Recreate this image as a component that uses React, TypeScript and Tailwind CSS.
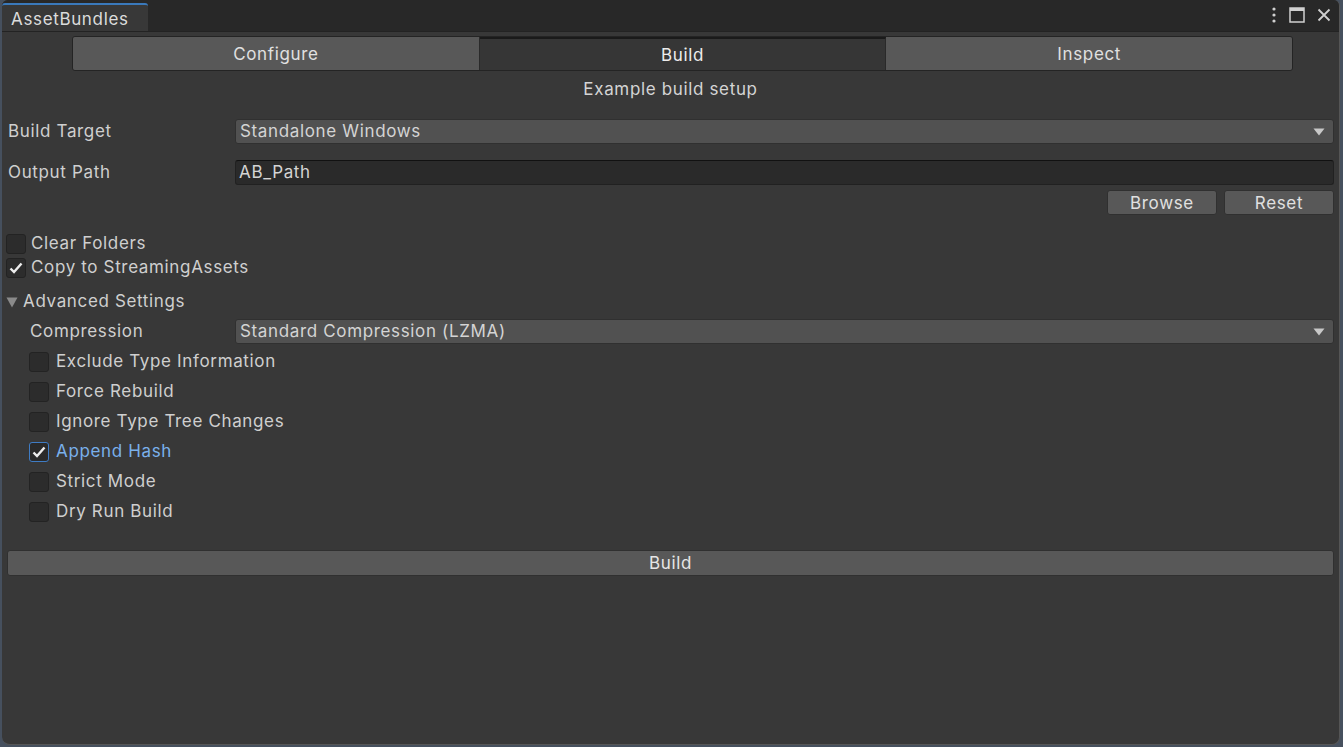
import { useState } from 'react';

const font = { fontFamily: 'Inter, "Noto Sans", sans-serif' };

function Checkbox({ checked, focused }: { checked: boolean; focused?: boolean }) {
  return (
    <div
      className={`w-[20px] h-[20px] rounded-[3px] border flex items-center justify-center shrink-0 ${
        focused ? 'border-[#3f7cc4] bg-[#2a2a2a]' : 'border-[#232323] bg-[#2c2c2c]'
      }`}
    >
      {checked && (
        <svg width="16" height="16" viewBox="0 0 16 16">
          <path d="M2.5 8.5 L6 12 L13.5 3.5" stroke="#ededed" strokeWidth="2.4" fill="none" />
        </svg>
      )}
    </div>
  );
}

function Dropdown({ value }: { value: string }) {
  return (
    <div className="flex-1 h-[25px] rounded-[3px] bg-[#515151] border border-[#303030] flex items-center justify-between pl-[4px] pr-[8px] text-[#d4d4d4]">
      <span>{value}</span>
      <svg width="12" height="8" viewBox="0 0 12 8">
        <path d="M0.5 0.5 L11.5 0.5 L6 7.5 Z" fill="#c8c8c8" />
      </svg>
    </div>
  );
}

export default function App() {
  const [tab, setTab] = useState('Build');
  const [opts, setOpts] = useState<Record<string, boolean>>({
    'Exclude Type Information': false,
    'Force Rebuild': false,
    'Ignore Type Tree Changes': false,
    'Append Hash': true,
    'Strict Mode': false,
    'Dry Run Build': false,
  });

  return (
    <div className="w-[1343px] h-[747px] bg-[#46505e] pl-[2px] pr-[3px] pb-[2px] overflow-hidden" style={font}>
      <div className="w-full h-full rounded-t-[6px] rounded-b-[8px] bg-[#383838] border-r border-b border-[#555] flex flex-col overflow-hidden text-[17px] tracking-[0.65px] text-[#cfcfcf]">
        {/* TITLE BAR */}
        <div className="h-[32px] bg-[#282828] flex items-end shrink-0 border-b border-[#232323]">
          <div className="w-[146px] h-[28px] bg-[#383838] border-t-2 border-[#3a79bb] rounded-t-[3px] pl-[9px] pt-[3px] flex items-center text-[#dcdcdc]">
            AssetBundles
          </div>
          <div className="flex-1" />
          <div className="h-full flex items-center gap-[12px] pr-[8px] pb-[1px]">
            <svg width="6" height="18" viewBox="0 0 6 18">
              <circle cx="3" cy="3" r="1.6" fill="#d0d0d0" />
              <circle cx="3" cy="9" r="1.6" fill="#d0d0d0" />
              <circle cx="3" cy="15" r="1.6" fill="#d0d0d0" />
            </svg>
            <svg width="16" height="16" viewBox="0 0 16 16">
              <rect x="1" y="1" width="14" height="14" fill="none" stroke="#d0d0d0" strokeWidth="1.5" />
              <rect x="1" y="1" width="14" height="3" fill="#d0d0d0" />
            </svg>
            <svg width="14" height="14" viewBox="0 0 14 14">
              <path d="M1.5 1.5 L12.5 12.5 M12.5 1.5 L1.5 12.5" stroke="#d0d0d0" strokeWidth="1.8" />
            </svg>
          </div>
        </div>

        {/* TABS */}
        <div className="flex pl-[70px] pr-[46px] pt-[4px]">
          <div className="flex-1 flex h-[35px] rounded-[3px] overflow-hidden border border-[#242424]">
            {['Configure', 'Build', 'Inspect'].map(t => (
              <button
                key={t}
                onClick={() => setTab(t)}
                className={`flex-1 flex items-center justify-center pt-[2px] border-r border-[#2a2a2a] last:border-r-0 tracking-[0.65px] ${
                  tab === t ? 'bg-[#363636] border-t-2 border-t-[#1a1a1a] text-[#ececec]' : 'bg-[#585858] text-[#e0e0e0]'
                }`}
              >
                {t}
              </button>
            ))}
          </div>
        </div>

        <div className="text-center mt-[7px] h-[22px] leading-[22px] text-[#d4d4d4]">Example build setup</div>

        {/* FIELDS */}
        <div className="pl-[5px] pr-[5px] mt-[19px]">
          <div className="flex items-center h-[25px]">
            <div className="w-[228px] pl-[1px]">Build Target</div>
            <Dropdown value="Standalone Windows" />
          </div>

          <div className="flex items-center h-[25px] mt-[16px]">
            <div className="w-[228px] pl-[1px]">Output Path</div>
            <div className="flex-1 h-[25px] rounded-[3px] bg-[#2a2a2a] border border-[#212121] border-t-[#111] flex items-center pl-[3px] text-[#d4d4d4]">
              AB_Path
            </div>
          </div>

          <div className="flex justify-end gap-[7px] mt-[5px]">
            <button className="w-[110px] h-[25px] rounded-[3px] bg-[#585858] border border-[#303030] text-[#e0e0e0] tracking-[0.65px]">Browse</button>
            <button className="w-[110px] h-[25px] rounded-[3px] bg-[#585858] border border-[#303030] text-[#e0e0e0] tracking-[0.65px]">Reset</button>
          </div>

          <div className="mt-[17px] flex flex-col">
            <div className="flex items-center gap-[5px] h-[24px] -ml-[1px]">
              <Checkbox checked={false} />
              <span>Clear Folders</span>
            </div>
            <div className="flex items-center gap-[5px] h-[24px] -ml-[1px]">
              <Checkbox checked />
              <span>Copy to StreamingAssets</span>
            </div>
          </div>

          <div className="flex items-center gap-[5px] mt-[10px] h-[24px] -ml-[1px]">
            <svg width="12" height="11" viewBox="0 0 12 11">
              <path d="M0.5 0.5 L11.5 0.5 L6 10.5 Z" fill="#8a8a8a" />
            </svg>
            <span>Advanced Settings</span>
          </div>

          <div className="pl-[22px] mt-[5px]">
            <div className="flex items-center h-[25px]">
              <div className="w-[206px] pl-[1px]">Compression</div>
              <Dropdown value="Standard Compression (LZMA)" />
            </div>

            <div className="flex flex-col mt-[3px]">
              {Object.keys(opts).map(k => (
                <div
                  key={k}
                  className="flex items-center gap-[7px] h-[30px] cursor-default"
                  onClick={() => setOpts({ ...opts, [k]: !opts[k] })}
                >
                  <Checkbox checked={opts[k]} focused={k === 'Append Hash'} />
                  <span className={k === 'Append Hash' ? 'text-[#7ab0ec]' : ''}>{k}</span>
                </div>
              ))}
            </div>
          </div>

          <button className="w-full h-[26px] mt-[23px] rounded-[3px] bg-[#585858] border border-[#303030] text-[#e6e6e6] tracking-[0.65px]">
            Build
          </button>
        </div>
      </div>
    </div>
  );
}
